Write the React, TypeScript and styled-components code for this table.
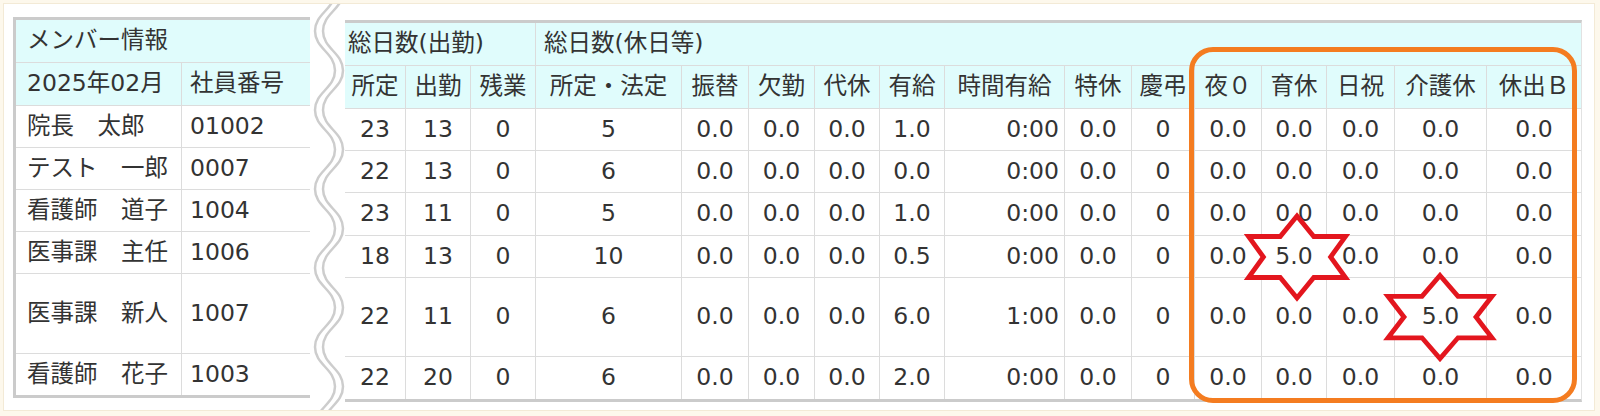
import React from 'react';
import styled, { createGlobalStyle } from 'styled-components';

const GlobalStyle = createGlobalStyle`
  html, body {
    margin: 0;
    padding: 0;
    background: #fdf8ec;
  }
  body {
    font-family: "DejaVu Sans", "Noto Sans CJK JP", sans-serif;
    color: #333;
  }
`;

const Page = styled.div`
  width: 1600px;
  height: 416px;
  padding: 4px;
  box-sizing: border-box;
`;

const Card = styled.div`
  position: relative;
  width: 1590px;
  height: 406px;
  background: #fff;
  box-shadow: 0 0 0 1px #f3ead6;
  display: flex;
  align-items: flex-start;
`;

const MemberGrid = styled.div`
  margin: 13px 0 0 9px;
  display: grid;
  grid-template-columns: 166px 128px;
  grid-template-rows: 43px 43px 42px 42px 42px 42px 80px 41px;
  border-top: 3px solid #cbcbcb;
  border-left: 3px solid #cbcbcb;
  border-bottom: 3px solid #cbcbcb;
`;

const BreakColumn = styled.div`
  width: 35px;
  align-self: stretch;
  flex-shrink: 0;
`;

const CountGrid = styled.div<{ $cols: string }>`
  margin-top: 16px;
  display: grid;
  grid-template-columns: ${(p) => p.$cols};
  grid-template-rows: 43px 43px 42px 42px 43px 42px 79px 42px;
  border-top: 3px solid #cbcbcb;
  border-bottom: 3px solid #cbcbcb;
  border-right: 1px solid #e2e2e2;
`;

const Cell = styled.div<{
  $head?: boolean;
  $align?: 'left' | 'center' | 'right';
  $span?: number;
  $indent?: number;
  $lastRow?: boolean;
  $lastCol?: boolean;
  $marked?: boolean;
}>`
  position: ${(p) => (p.$marked ? 'relative' : 'static')};
  z-index: ${(p) => (p.$marked ? 2 : 'auto')};
  box-sizing: border-box;
  display: flex;
  align-items: center;
  justify-content: ${(p) =>
    p.$align === 'left' ? 'flex-start' : p.$align === 'right' ? 'flex-end' : 'center'};
  padding: ${(p) =>
    p.$align === 'left'
      ? `0 0 0 ${p.$indent ?? 8}px`
      : p.$align === 'right'
      ? '0 5px 0 0'
      : '0'};
  grid-column: ${(p) => (p.$span ? `span ${p.$span}` : 'auto')};
  background: ${(p) => (p.$head ? '#e0fcfc' : '#fff')};
  border-right: ${(p) => (p.$lastCol ? 'none' : '1px solid #dcdcdc')};
  border-bottom: ${(p) => (p.$lastRow ? 'none' : '1px solid #dcdcdc')};
  font-size: 23.5px;
  line-height: 1;
  white-space: nowrap;
  color: #333;
`;

const CellText = styled.span`
  position: relative;
  z-index: 1;
`;

const Highlight = styled.div`
  position: absolute;
  left: 1185px;
  top: 43px;
  width: 388px;
  height: 356px;
  box-sizing: border-box;
  border: 5px solid #f47c20;
  border-radius: 24px;
  pointer-events: none;
  z-index: 3;
`;

const StarSvg = styled.svg<{ $dx: number }>`
  position: absolute;
  left: 50%;
  top: 50%;
  transform: translate(calc(-50% + ${(p) => p.$dx}px), -50%);
  pointer-events: none;
  overflow: visible;
`;

const Star = ({ w, h, dx = 0 }: { w: number; h: number; dx?: number }) => {
  const pad = 4;
  const cx = w / 2 + pad;
  const cy = h / 2 + pad;
  const sx = w / 2 / 0.866;
  const sy = h / 2;
  const r = 0.6;
  const pts: [number, number][] = [
    [0, -1],
    [0.3, -0.5],
    [0.866, -0.5],
    [r, 0],
    [0.866, 0.5],
    [0.3, 0.5],
    [0, 1],
    [-0.3, 0.5],
    [-0.866, 0.5],
    [-r, 0],
    [-0.866, -0.5],
    [-0.3, -0.5],
  ];
  const points = pts.map(([x, y]) => `${(cx + x * sx).toFixed(1)},${(cy + y * sy).toFixed(1)}`).join(' ');
  return (
    <StarSvg $dx={dx} width={w + pad * 2} height={h + pad * 2}>
      <polygon points={points} fill="#fff" stroke="#e3161e" strokeWidth={4.8} strokeLinejoin="miter" />
    </StarSvg>
  );
};

const wavePath = (x0: number) => {
  const amp = 20;
  const half = 39.5;
  const k = half * 0.45;
  let y = 27 - half * 2;
  let x = x0;
  let d = `M ${x} ${y}`;
  while (y < 430) {
    const nx = x === x0 ? x0 + amp : x0;
    const ny = y + half;
    d += ` C ${x} ${y + k} ${nx} ${ny - k} ${nx} ${ny}`;
    x = nx;
    y = ny;
  }
  return d;
};

const BreakMark = () => (
  <svg width="35" height="406" viewBox="0 0 35 406">
    <path d={wavePath(5)} fill="none" stroke="#cdcdcd" strokeWidth={2.5} />
    <path d={wavePath(13)} fill="none" stroke="#cdcdcd" strokeWidth={2.5} />
  </svg>
);

const colWidths = [61, 65, 65, 146, 67, 66, 65, 65, 120, 67, 63, 67, 65, 68, 92, 94];

const headers = [
  '所定', '出勤', '残業', '所定・法定', '振替', '欠勤', '代休', '有給',
  '時間有給', '特休', '慶弔', '夜０', '育休', '日祝', '介護休', '休出Ｂ',
];

type Member = { name: string; id: string; values: string[] };

const members: Member[] = [
  { name: '院長　太郎', id: '01002', values: ['23', '13', '0', '5', '0.0', '0.0', '0.0', '1.0', '0:00', '0.0', '0', '0.0', '0.0', '0.0', '0.0', '0.0'] },
  { name: 'テスト　一郎', id: '0007', values: ['22', '13', '0', '6', '0.0', '0.0', '0.0', '0.0', '0:00', '0.0', '0', '0.0', '0.0', '0.0', '0.0', '0.0'] },
  { name: '看護師　道子', id: '1004', values: ['23', '11', '0', '5', '0.0', '0.0', '0.0', '1.0', '0:00', '0.0', '0', '0.0', '0.0', '0.0', '0.0', '0.0'] },
  { name: '医事課　主任', id: '1006', values: ['18', '13', '0', '10', '0.0', '0.0', '0.0', '0.5', '0:00', '0.0', '0', '0.0', '5.0', '0.0', '0.0', '0.0'] },
  { name: '医事課　新人', id: '1007', values: ['22', '11', '0', '6', '0.0', '0.0', '0.0', '6.0', '1:00', '0.0', '0', '0.0', '0.0', '0.0', '5.0', '0.0'] },
  { name: '看護師　花子', id: '1003', values: ['22', '20', '0', '6', '0.0', '0.0', '0.0', '2.0', '0:00', '0.0', '0', '0.0', '0.0', '0.0', '0.0', '0.0'] },
];

// marked cells: "row-col" -> star size
const stars: Record<string, { w: number; h: number; dx: number }> = {
  '3-12': { w: 97, h: 82, dx: 3 },
  '4-14': { w: 104, h: 83, dx: -1 },
};

const TIME_COL = 8;

export default function App() {
  const last = members.length - 1;
  return (
    <Page>
      <GlobalStyle />
      <Card>
        <MemberGrid>
          <Cell $head $align="left" $span={2} $indent={11} $lastCol>
            メンバー情報
          </Cell>
          <Cell $head $align="left" $indent={11}>2025年02月</Cell>
          <Cell $head $align="left" $lastCol>社員番号</Cell>
          {members.map((m, i) => (
            <React.Fragment key={m.id}>
              <Cell $align="left" $indent={11} $lastRow={i === last}>{m.name}</Cell>
              <Cell $align="left" $lastRow={i === last} $lastCol>{m.id}</Cell>
            </React.Fragment>
          ))}
        </MemberGrid>

        <BreakColumn>
          <BreakMark />
        </BreakColumn>

        <CountGrid $cols={colWidths.map((w) => `${w}px`).join(' ')}>
          <Cell $head $align="left" $span={3} $indent={3}>総日数(出勤)</Cell>
          <Cell $head $align="left" $span={13} $indent={8} $lastCol>総日数(休日等)</Cell>
          {headers.map((h, c) => (
            <Cell key={h} $head $lastCol={c === headers.length - 1}>{h}</Cell>
          ))}
          {members.map((m, i) =>
            m.values.map((v, c) => {
              const star = stars[`${i}-${c}`];
              return (
                <Cell
                  key={`${m.id}-${c}`}
                  $align={c === TIME_COL ? 'right' : 'center'}
                  $lastRow={i === last}
                  $lastCol={c === m.values.length - 1}
                  $marked={!!star}
                >
                  {star && <Star w={star.w} h={star.h} dx={star.dx} />}
                  <CellText>{v}</CellText>
                </Cell>
              );
            })
          )}
        </CountGrid>

        <Highlight />
      </Card>
    </Page>
  );
}
